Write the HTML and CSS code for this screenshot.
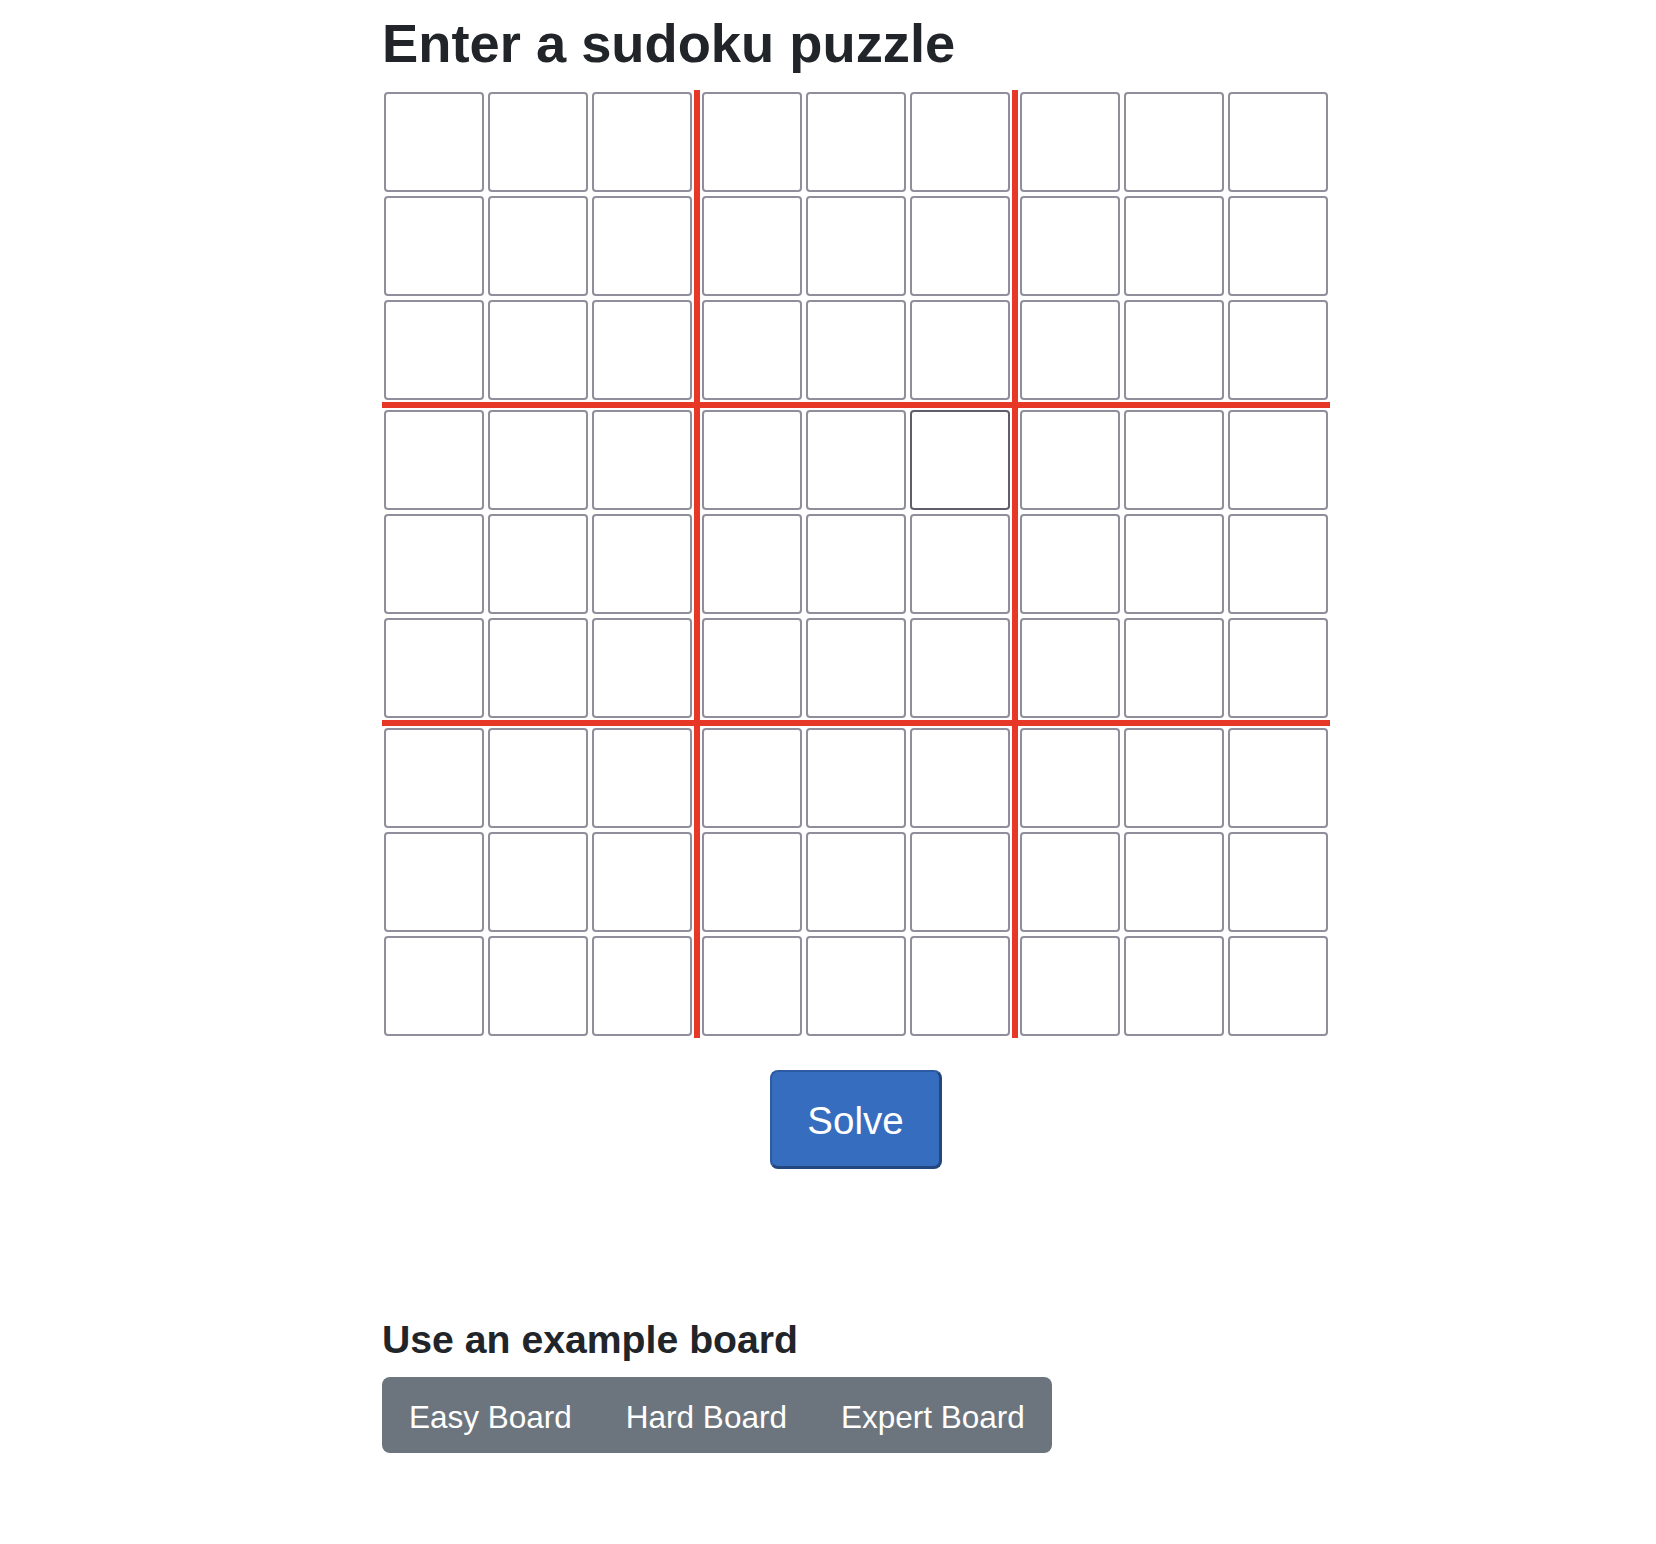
FILE: index.html
```html
<!DOCTYPE html>
<html lang="en">
<head>
<meta charset="utf-8">
<title>Sudoku Solver</title>
<link rel="stylesheet" href="styles.css">
</head>
<body>
<main class="page">
  <h1 class="title">Enter a sudoku puzzle</h1>
  <div class="board">
    <div class="box"><input class="cell"><input class="cell"><input class="cell"><input class="cell"><input class="cell"><input class="cell"><input class="cell"><input class="cell"><input class="cell"></div>
    <div class="box"><input class="cell"><input class="cell"><input class="cell"><input class="cell"><input class="cell"><input class="cell"><input class="cell"><input class="cell"><input class="cell"></div>
    <div class="box"><input class="cell"><input class="cell"><input class="cell"><input class="cell"><input class="cell"><input class="cell"><input class="cell"><input class="cell"><input class="cell"></div>
    <div class="box"><input class="cell"><input class="cell"><input class="cell"><input class="cell"><input class="cell"><input class="cell"><input class="cell"><input class="cell"><input class="cell"></div>
    <div class="box"><input class="cell"><input class="cell"><input class="cell"><input class="cell"><input class="cell"><input class="cell"><input class="cell"><input class="cell"><input class="cell"></div>
    <div class="box"><input class="cell"><input class="cell"><input class="cell"><input class="cell"><input class="cell"><input class="cell"><input class="cell"><input class="cell"><input class="cell"></div>
    <div class="box"><input class="cell"><input class="cell"><input class="cell"><input class="cell"><input class="cell"><input class="cell"><input class="cell"><input class="cell"><input class="cell"></div>
    <div class="box"><input class="cell"><input class="cell"><input class="cell"><input class="cell"><input class="cell"><input class="cell"><input class="cell"><input class="cell"><input class="cell"></div>
    <div class="box"><input class="cell"><input class="cell"><input class="cell"><input class="cell"><input class="cell"><input class="cell"><input class="cell"><input class="cell"><input class="cell"></div>
  </div>
  <div class="actions">
    <button class="solve" type="button">Solve</button>
  </div>
  <h2 class="subtitle">Use an example board</h2>
  <div class="btn-group">
    <button class="example" type="button">Easy Board</button>
    <button class="example" type="button">Hard Board</button>
    <button class="example" type="button">Expert Board</button>
  </div>
</main>
</body>
</html>
```
FILE: styles.css
```css
html, body {
  margin: 0;
  padding: 0;
  background: #ffffff;
}

body {
  font-family: "Liberation Sans", Arial, Helvetica, sans-serif;
  color: #212529;
}

.page {
  margin-left: 382px;
  width: 948px;
}

.title {
  font-size: 54.3px;
  line-height: 64px;
  font-weight: 700;
  margin: 12px 0 14px 0;
  color: #212529;
}

.board {
  display: grid;
  grid-template-columns: repeat(3, 312px);
  grid-template-rows: repeat(3, 312px);
  gap: 6px;
  width: 948px;
  height: 948px;
  background: #e73827;
}

.box {
  display: grid;
  grid-template-columns: repeat(3, 104px);
  grid-template-rows: repeat(3, 104px);
  background: #ffffff;
}

.cell {
  box-sizing: border-box;
  width: 100px;
  height: 100px;
  margin: 2px;
  padding: 0;
  border: 2px solid #8f8e9a;
  border-radius: 4px;
  background: #ffffff;
  font-family: "Liberation Sans", Arial, sans-serif;
  font-size: 40px;
  text-align: center;
  outline: none;
}

.box:nth-child(5) .cell:nth-child(3) {
  border-color: #5f5e69;
}

.actions {
  display: flex;
  justify-content: center;
  margin-top: 32px;
}

.solve {
  box-sizing: border-box;
  height: 99px;
  padding: 25px 35px 23px 35px;
  font-family: "Liberation Sans", Arial, sans-serif;
  font-size: 38.5px;
  line-height: 47px;
  color: #ffffff;
  background: #376dbf;
  border-style: solid;
  border-width: 2px 3px 3px 2px;
  border-color: #2d5ba3 #22477f #22477f #2d5ba3;
  border-radius: 8px;
}

.subtitle {
  font-size: 39.2px;
  line-height: 46px;
  font-weight: 700;
  margin: 148px 0 14px 0;
  color: #212529;
}

.btn-group {
  display: inline-flex;
  background: #6c757d;
  border-radius: 8px;
}

.example {
  padding: 22px 27px 18px 27px;
  font-family: "Liberation Sans", Arial, sans-serif;
  font-size: 31.5px;
  line-height: 36px;
  color: #ffffff;
  background: transparent;
  border: none;
}
```
